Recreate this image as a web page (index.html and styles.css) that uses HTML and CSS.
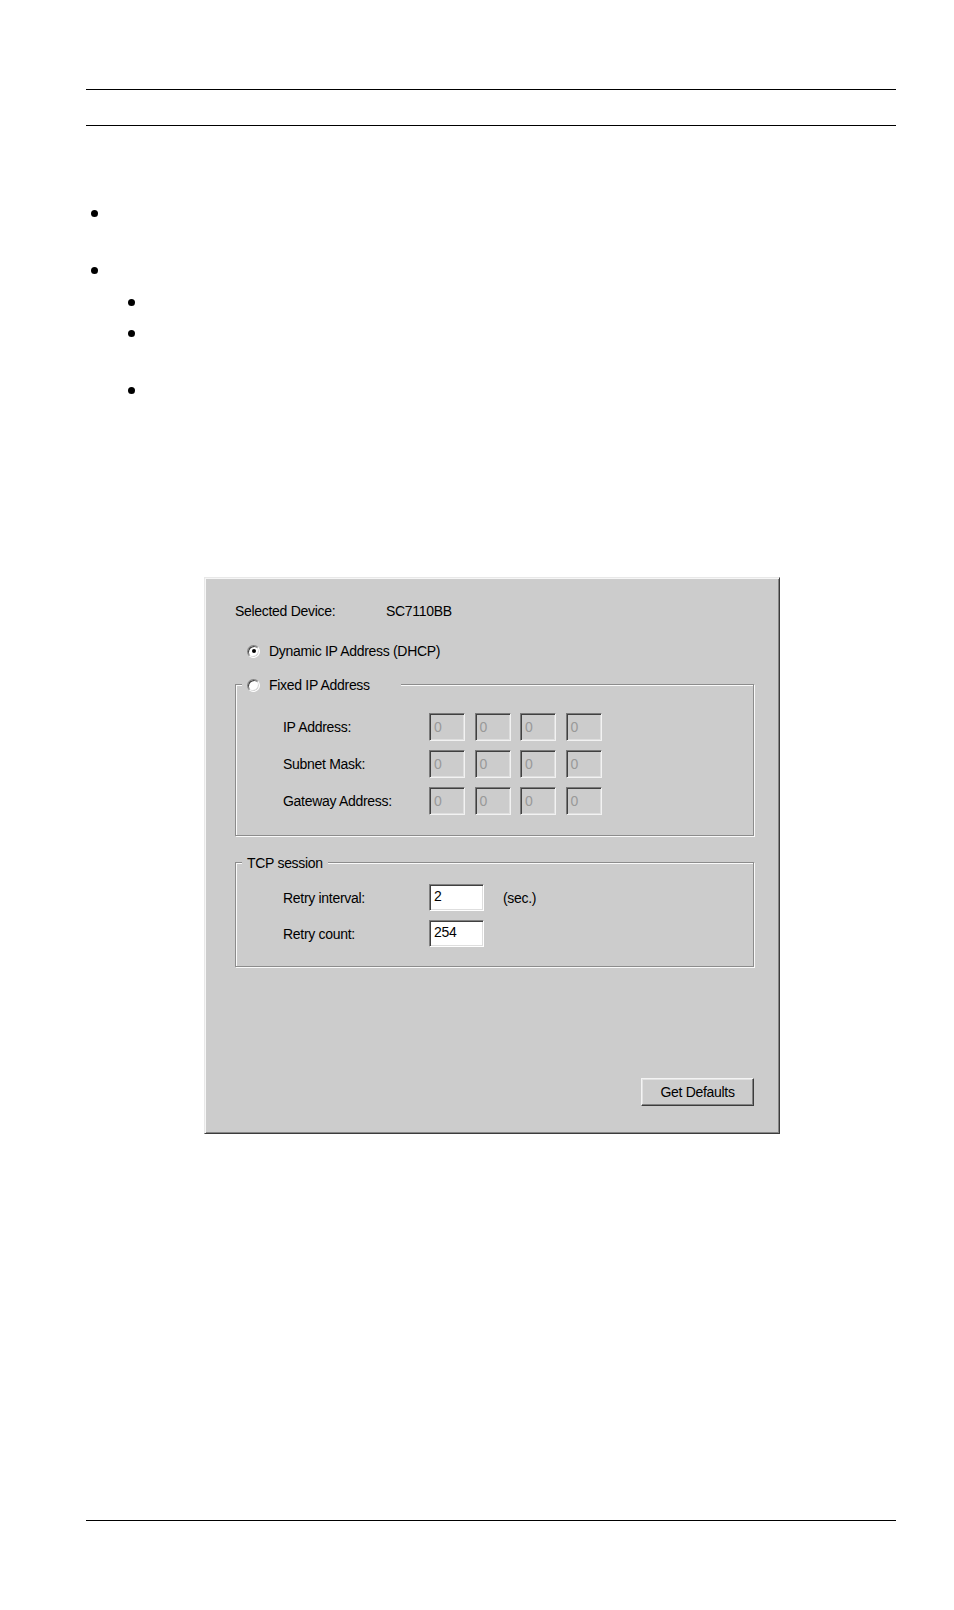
FILE: index.html
```html
<!DOCTYPE html>
<html lang="en">
<head>
<meta charset="utf-8">
<title>Device IP Settings</title>
<link rel="stylesheet" href="styles.css">
</head>
<body>
<div class="page">
  <header class="running-head"></header>

  <ul class="bullets">
    <li class="bullet level-1"></li>
    <li class="bullet level-1 gap-lg"></li>
    <li class="bullet level-2 gap-sm"></li>
    <li class="bullet level-2 gap-sm"></li>
    <li class="bullet level-2 gap-lg"></li>
  </ul>

  <div class="dialog">
    <div class="device-row">
      <span class="device-label">Selected Device:</span>
      <span class="device-value">SC7110BB</span>
    </div>

    <div class="radio-row">
      <span class="radio checked"></span>
      <span class="radio-text">Dynamic IP Address (DHCP)</span>
    </div>

    <div class="group fixed-group">
      <div class="legend fixed-legend">
        <span class="radio"></span>
        <span class="radio-text">Fixed IP Address</span>
      </div>
      <div class="ip-grid">
        <span class="field-label">IP Address:</span>
        <span class="ip-field">0</span>
        <span class="ip-field">0</span>
        <span class="ip-field">0</span>
        <span class="ip-field">0</span>

        <span class="field-label">Subnet Mask:</span>
        <span class="ip-field">0</span>
        <span class="ip-field">0</span>
        <span class="ip-field">0</span>
        <span class="ip-field">0</span>

        <span class="field-label">Gateway Address:</span>
        <span class="ip-field">0</span>
        <span class="ip-field">0</span>
        <span class="ip-field">0</span>
        <span class="ip-field">0</span>
      </div>
    </div>

    <div class="group tcp-group">
      <div class="legend tcp-legend">TCP session</div>
      <div class="tcp-grid">
        <span class="field-label">Retry interval:</span>
        <span class="edit-field">2</span>
        <span class="unit">(sec.)</span>

        <span class="field-label">Retry count:</span>
        <span class="edit-field">254</span>
        <span class="unit"></span>
      </div>
    </div>

    <div class="button-row">
      <span class="button">Get Defaults</span>
    </div>
  </div>

  <footer class="running-foot"></footer>
</div>
</body>
</html>
```

FILE: styles.css
```css
* {
  box-sizing: border-box;
}

html,
body {
  margin: 0;
  padding: 0;
  background: #ffffff;
}

body {
  font-family: "Liberation Sans", Arial, sans-serif;
  font-size: 14px;
  color: #000000;
}

.page {
  width: 954px;
  min-height: 1610px;
  padding-top: 89px;
}

/* running header: two horizontal rules */
.running-head {
  margin: 0 58px 0 86px;
  height: 37px;
  border-top: 1px solid #000000;
  border-bottom: 1px solid #000000;
}

.running-foot {
  margin: 386px 58px 0 86px;
  height: 1px;
  border-top: 1px solid #000000;
}

/* bullet markers (text-free list) */
.bullets {
  list-style: none;
  margin: 84px 0 0 91px;
  padding: 0;
}

.bullet {
  width: 7px;
  height: 7px;
  border-radius: 50%;
  background: #000000;
}

.bullet.level-2 {
  margin-left: 37px;
}

.bullet.gap-lg {
  margin-top: 50px;
}

.bullet.gap-sm {
  margin-top: 24px;
}

.bullet.level-2.gap-sm:nth-child(3) {
  margin-top: 25px;
}

/* dialog panel */
.dialog {
  margin: 183px 0 0 204px;
  width: 576px;
  height: 557px;
  padding: 25px 25px 0 30px;
  background: #cccccc;
  border: 1px solid;
  border-color: #e8e8e8 #3c3c3c #3c3c3c #e8e8e8;
  box-shadow: inset 1px 1px 0 #f6f6f6, inset -1px -1px 0 #868686;
  letter-spacing: -0.3px;
  line-height: 16px;
}

.device-row {
  display: flex;
  height: 16px;
}

.device-label {
  width: 151px;
}

.radio-row {
  display: flex;
  align-items: center;
  height: 16px;
  margin-top: 24px;
  padding-left: 12px;
}

.radio {
  flex: none;
  width: 13px;
  height: 13px;
  border-radius: 50%;
  border: 1px solid;
  border-color: #828282 #ffffff #ffffff #828282;
  box-shadow: inset 1px 1px 0 #424242, inset -1px -1px 0 #d6d6d6;
  background: #ffffff;
  display: flex;
  align-items: center;
  justify-content: center;
}

.radio.checked::after {
  content: "";
  width: 4px;
  height: 4px;
  border-radius: 50%;
  background: #000000;
}

.radio-text {
  margin-left: 9px;
}

/* etched group boxes */
.group {
  width: 519px;
  border: 1px solid #8c8c8c;
  box-shadow: inset 1px 1px 0 #fafafa, 1px 1px 0 #fafafa;
}

.fixed-group {
  margin-top: 25px;
  height: 152px;
}

.tcp-group {
  margin-top: 26px;
  height: 105px;
}

.legend {
  display: flex;
  align-items: center;
  height: 16px;
  margin-top: -8px;
  margin-left: 6px;
  background: #cccccc;
}

.fixed-legend {
  width: 159px;
  padding-left: 5px;
}

.tcp-legend {
  width: max-content;
  padding: 0 5px 0 5px;
}

.field-label {
  white-space: nowrap;
}

.ip-grid {
  display: grid;
  grid-template-columns: 136.5px repeat(4, 36px);
  grid-auto-rows: 28px;
  column-gap: 9.5px;
  row-gap: 9px;
  align-items: center;
  margin-top: 20px;
  padding-left: 47px;
}

.ip-field,
.edit-field {
  height: 100%;
  border: 1px solid;
  border-color: #808080 #ffffff #ffffff #808080;
  box-shadow: inset 1px 1px 0 #404040, inset -1px -1px 0 #dedede;
  padding: 3px 0 0 4px;
  line-height: 16px;
}

.ip-field {
  background: #cccccc;
  color: #999999;
  padding-top: 5px;
  border-color: #7a7a7a #f2f2f2 #f2f2f2 #7a7a7a;
}

.edit-field {
  background: #ffffff;
  color: #000000;
}

.tcp-grid {
  display: grid;
  grid-template-columns: 146px 55px auto;
  grid-auto-rows: 27px;
  row-gap: 9px;
  align-items: center;
  margin-top: 13px;
  padding-left: 47px;
}

.unit {
  margin-left: 19px;
}

.button-row {
  display: flex;
  justify-content: flex-end;
  margin-top: 111px;
}

.button {
  width: 113px;
  height: 28px;
  display: flex;
  align-items: center;
  justify-content: center;
  background: #cccccc;
  border: 1px solid;
  border-color: #f4f4f4 #3c3c3c #3c3c3c #f4f4f4;
  box-shadow: inset -1px -1px 0 #828282, inset 1px 1px 0 #e2e2e2;
}
```
